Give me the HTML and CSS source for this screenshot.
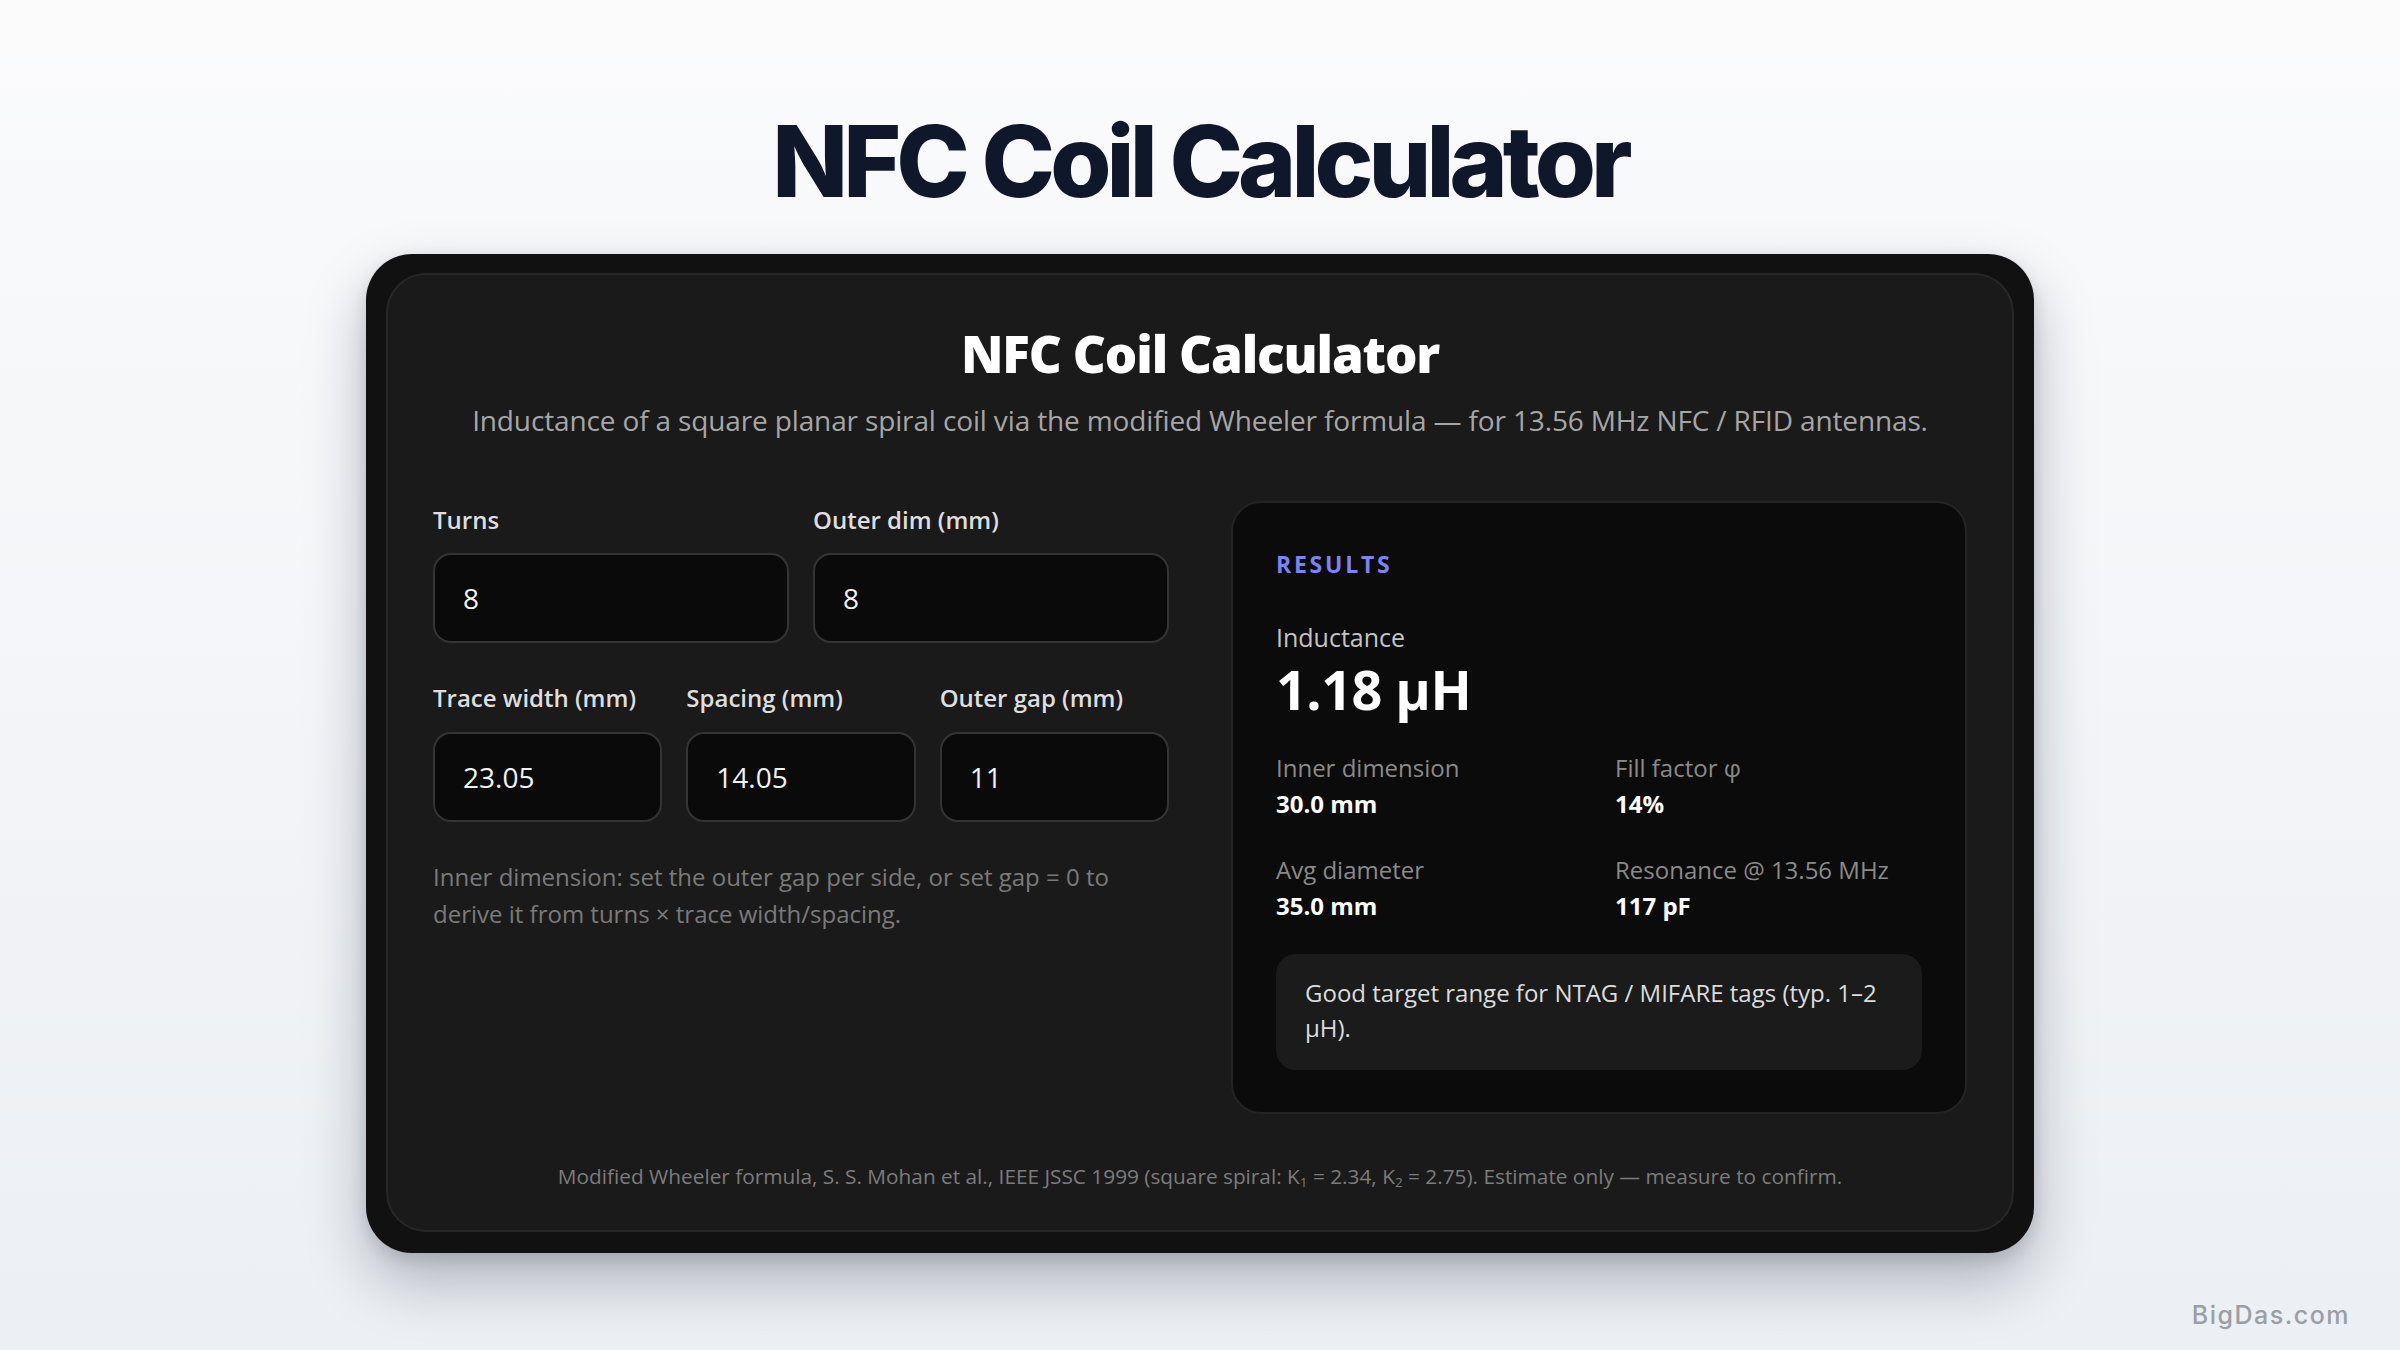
FILE: index.html
```html
<!DOCTYPE html>
<html lang="en">
<head>
<meta charset="utf-8">
<title>NFC Coil Calculator</title>
<link rel="stylesheet" href="styles.css">
</head>
<body>
<main class="page">
  <h1 class="page-title">NFC Coil Calculator</h1>
  <div class="frame">
    <section class="card">
      <h2 class="card-title">NFC Coil Calculator</h2>
      <p class="subtitle">Inductance of a square planar spiral coil via the modified Wheeler formula — for 13.56 MHz NFC / RFID antennas.</p>
      <div class="layout">
        <div class="form">
          <div class="row row-2">
            <label class="field"><span class="field-label">Turns</span><input class="input" type="text" value="8"></label>
            <label class="field"><span class="field-label">Outer dim (mm)</span><input class="input" type="text" value="8"></label>
          </div>
          <div class="row row-3">
            <label class="field"><span class="field-label">Trace width (mm)</span><input class="input" type="text" value="23.05"></label>
            <label class="field"><span class="field-label">Spacing (mm)</span><input class="input" type="text" value="14.05"></label>
            <label class="field"><span class="field-label">Outer gap (mm)</span><input class="input" type="text" value="11"></label>
          </div>
          <p class="note">Inner dimension: set the outer gap per side, or set gap = 0 to derive it from turns × trace width/spacing.</p>
        </div>
        <div class="results">
          <div class="results-head">RESULTS</div>
          <div class="main-label">Inductance</div>
          <div class="main-value">1.18 µH</div>
          <div class="stats">
            <div class="stat"><div class="stat-label">Inner dimension</div><div class="stat-value">30.0 mm</div></div>
            <div class="stat"><div class="stat-label">Fill factor φ</div><div class="stat-value">14%</div></div>
            <div class="stat"><div class="stat-label">Avg diameter</div><div class="stat-value">35.0 mm</div></div>
            <div class="stat"><div class="stat-label">Resonance @ 13.56 MHz</div><div class="stat-value">117 pF</div></div>
          </div>
          <div class="message">Good target range for NTAG / MIFARE tags (typ. 1–2 µH).</div>
        </div>
      </div>
      <p class="footnote">Modified Wheeler formula, S. S. Mohan et al., IEEE JSSC 1999 (square spiral: K<sub class="sub">1</sub> = 2.34, K<sub class="sub">2</sub> = 2.75). Estimate only — measure to confirm.</p>
    </section>
  </div>
</main>
<div class="watermark">BigDas.com</div>
</body>
</html>
```

FILE: styles.css
```css
* { box-sizing: border-box; }
html, body { margin: 0; padding: 0; }
body {
  width: 2400px;
  height: 1350px;
  overflow: hidden;
  position: relative;
  background: linear-gradient(180deg, #fbfbfc 0%, #f3f5f8 50%, #eceff3 100%);
  font-family: "Open Sans", Lato, sans-serif;
}
.page {
  display: flex;
  flex-direction: column;
  align-items: center;
  padding-top: 112px;
}
.page-title {
  margin: 0 0 43px;
  font-family: Inter, sans-serif;
  font-weight: 800;
  font-size: 99px;
  line-height: 1;
  letter-spacing: -0.05em;
  color: #0f172a;
}
.frame {
  width: 1668px;
  padding: 19px 20px 21px;
  background: #111112;
  border-radius: 46px;
  box-shadow: 0 28px 60px rgba(15, 23, 42, 0.28), 0 6px 16px rgba(15, 23, 42, 0.12);
}
.card {
  background: #1a1a1a;
  border: 2px solid #272727;
  border-radius: 40px;
  padding: 48px 45px 39px;
  display: flex;
  flex-direction: column;
  align-items: stretch;
}
.card-title {
  margin: 0;
  text-align: center;
  font-weight: 800;
  font-size: 51px;
  line-height: 1.2;
  letter-spacing: -0.022em;
  color: #ffffff;
}
.subtitle {
  margin: 17px 0 0;
  text-align: center;
  font-size: 28px;
  line-height: 39px;
  letter-spacing: -0.005em;
  color: #a6a6a6;
}
.layout {
  margin-top: 61px;
  display: grid;
  grid-template-columns: 1fr 1fr;
  gap: 62px;
  align-items: start;
}
.form {
  display: flex;
  flex-direction: column;
  padding-top: 3px;
}
.row {
  display: grid;
  gap: 24px;
}
.row-2 { grid-template-columns: 1fr 1fr; }
.row-3 { grid-template-columns: 1fr 1fr 1fr; margin-top: 39px; }
.field {
  display: flex;
  flex-direction: column;
  gap: 18px;
}
.field-label {
  font-size: 24px;
  line-height: 1.3;
  font-weight: 600;
  color: #dedede;
}
.input {
  width: 100%;
  height: 90px;
  background: #0a0a0a;
  border: 2px solid #343434;
  border-radius: 18px;
  padding: 0 28px;
  font-family: "Open Sans", Lato, sans-serif;
  font-size: 28px;
  color: #f2f2f2;
  outline: none;
}
.note {
  margin: 36px 0 0;
  font-size: 24px;
  line-height: 37px;
  color: #7a7a7a;
}
.results {
  background: #0b0b0b;
  border: 2px solid #242424;
  border-radius: 30px;
  padding: 47.5px 43px 42.5px 43px;
  display: flex;
  flex-direction: column;
}
.results-head {
  font-size: 23px;
  line-height: 1.2;
  font-weight: 700;
  letter-spacing: 0.12em;
  color: #7d83f2;
}
.main-label {
  margin-top: 43px;
  font-size: 25px;
  line-height: 1.3;
  color: #c4c4c4;
}
.main-value {
  margin-top: 6.5px;
  font-size: 54px;
  line-height: 1.1;
  font-weight: 700;
  letter-spacing: -0.01em;
  color: #ffffff;
}
.stats {
  margin-top: 32.5px;
  display: grid;
  grid-template-columns: 1fr 1fr;
  column-gap: 32px;
  row-gap: 35px;
}
.stat-label {
  font-size: 24px;
  line-height: 1.3;
  color: #8a8a8a;
}
.stat-value {
  margin-top: 4.5px;
  font-size: 24px;
  line-height: 1.3;
  font-weight: 700;
  color: #ffffff;
}
.message {
  margin-top: 33px;
  background: #1b1b1b;
  border-radius: 20px;
  padding: 21px 29px 25px;
  font-size: 24px;
  line-height: 35px;
  color: #dcdcdc;
}
.footnote {
  margin: 47.5px 0 0;
  text-align: center;
  font-size: 20.8px;
  line-height: 1.4;
  color: #7c7c7c;
}
.sub {
  font-size: 0.65em;
  line-height: 0;
  vertical-align: -0.25em;
}
.watermark {
  position: absolute;
  right: 50px;
  bottom: 20px;
  font-family: Inter, sans-serif;
  font-weight: 500;
  font-size: 25px;
  letter-spacing: 0.06em;
  color: #9a9ea6;
}
```
